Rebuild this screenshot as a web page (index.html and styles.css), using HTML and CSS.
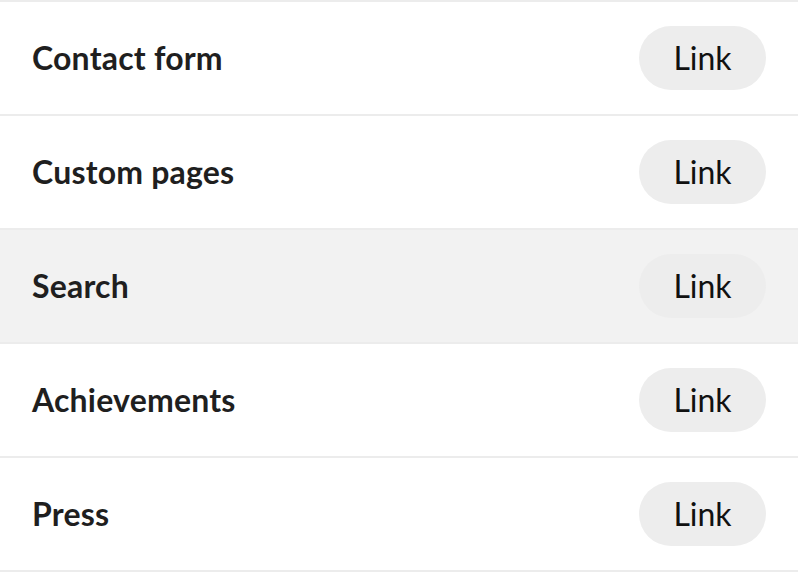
FILE: index.html
```html
<!DOCTYPE html>
<html>
<head>
<meta charset="utf-8">
<link rel="stylesheet" href="styles.css">
</head>
<body>
<ul class="list">
  <li class="row"><span class="title">Contact form</span><a class="btn">Link</a></li>
  <li class="row"><span class="title">Custom pages</span><a class="btn">Link</a></li>
  <li class="row row-hover"><span class="title">Search</span><a class="btn">Link</a></li>
  <li class="row"><span class="title">Achievements</span><a class="btn">Link</a></li>
  <li class="row row-last"><span class="title">Press</span><a class="btn">Link</a></li>
</ul>
</body>
</html>
```
FILE: styles.css
```css
html, body {
  margin: 0;
  padding: 0;
  background: #ffffff;
  font-family: Lato, "Noto Sans", sans-serif;
  color: #1f1f1f;
}
.list {
  list-style: none;
  margin: 0;
  padding: 0;
}
.row {
  display: flex;
  align-items: center;
  justify-content: space-between;
  height: 112px;
  padding: 0 32px;
  border-top: 2px solid #ececec;
}
.row-last {
  border-bottom: 2px solid #ececec;
}
.row-hover {
  background: #f2f2f2;
}
.title {
  padding-bottom: 2px;
  font-size: 32px;
  font-weight: 700;
  letter-spacing: 0.2px;
  color: #1f1f1f;
}
.btn {
  display: flex;
  align-items: center;
  justify-content: center;
  box-sizing: border-box;
  width: 127px;
  height: 64px;
  padding-bottom: 2px;
  border-radius: 32px;
  background: #ededed;
  font-size: 32px;
  font-weight: 400;
  color: #111111;
}
```
